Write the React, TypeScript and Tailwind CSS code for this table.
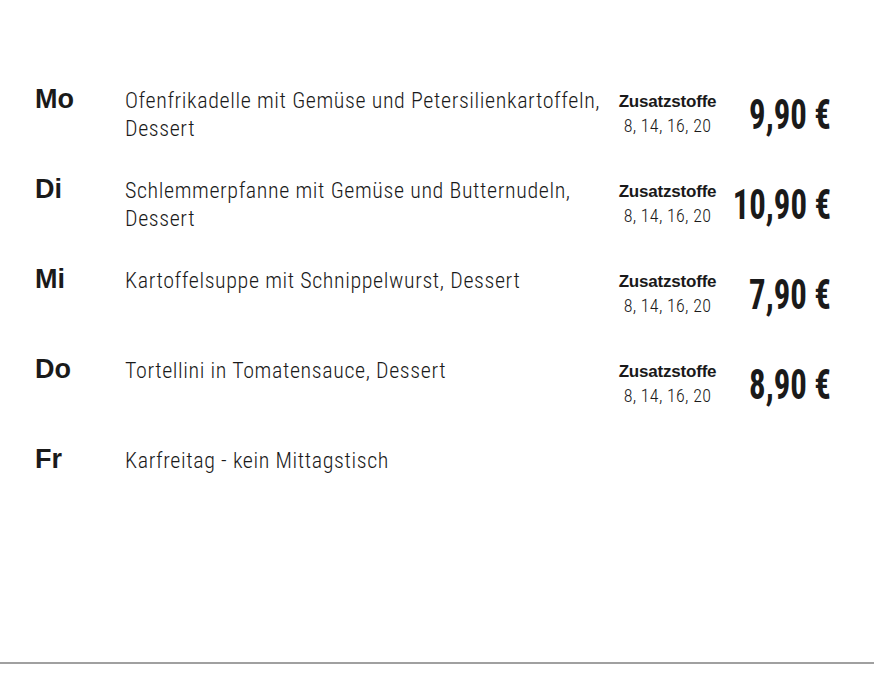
const days = [
  { day: "Mo", lines: ["Ofenfrikadelle mit Gemüse und Petersilienkartoffeln,", "Dessert"], price: "9,90 €" },
  { day: "Di", lines: ["Schlemmerpfanne mit Gemüse und Butternudeln,", "Dessert"], price: "10,90 €" },
  { day: "Mi", lines: ["Kartoffelsuppe mit Schnippelwurst, Dessert"], price: "7,90 €" },
  { day: "Do", lines: ["Tortellini in Tomatensauce, Dessert"], price: "8,90 €" },
  { day: "Fr", lines: ["Karfreitag - kein Mittagstisch"], price: "" },
];

export default function App() {
  return (
    <div className="w-[874px] h-[675px] bg-white flex flex-col text-[#1a1a1a] font-['Roboto_Condensed','Liberation_Sans',sans-serif]">
      <div className="flex flex-col pt-[80px] pl-[35px] pr-[43px] h-[662px]">
        {days.map((d) => (
          <div key={d.day} className="flex h-[90px]">
            <div className="w-[90px] shrink-0 font-['Liberation_Sans',sans-serif] font-bold text-[27px] leading-[38px]">
              {d.day}
            </div>
            <div className="w-[485px] shrink-0 flex flex-col text-[22px] font-light tracking-[0.6px] leading-[28px] pt-[7px]">
              {d.lines.map((l) => (
                <span key={l} className="whitespace-nowrap">{l}</span>
              ))}
            </div>
            {d.price && (
              <div className="flex flex-1 min-w-0 items-start">
                <div className="w-[115px] shrink-0 flex flex-col items-center pt-[12px]">
                  <span className="font-['Liberation_Sans',sans-serif] font-bold text-[17px] tracking-[-0.2px] leading-[20px]">
                    Zusatzstoffe
                  </span>
                  <span className="text-[18px] font-light tracking-[0.3px] leading-[28px]">8, 14, 16, 20</span>
                </div>
                <div className="flex-1 min-w-0 flex justify-end pt-[10px]">
                  <span className="inline-block shrink-0 origin-right scale-x-[0.78] font-bold text-[42px] leading-[50px] whitespace-nowrap">
                    {d.price}
                  </span>
                </div>
              </div>
            )}
          </div>
        ))}
      </div>
      <div className="h-[2px] bg-[#a0a0a0]" />
    </div>
  );
}
